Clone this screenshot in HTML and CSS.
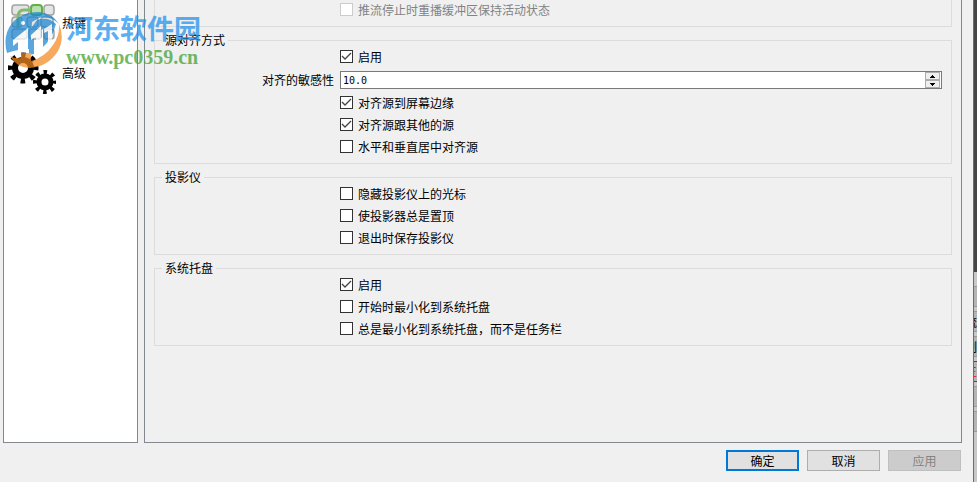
FILE: index.html
```html
<!DOCTYPE html>
<html lang="zh-CN">
<head>
    <meta charset="UTF-8">
    <meta name="viewport" content="width=device-width, initial-scale=1.0">
    <title>设置</title>
    <link rel="stylesheet" href="styles.css">
</head>
<body>

<div class="dialog">
    <div class="main">
        <nav class="sidebar">
            <a class="nav-item" href="#hotkeys">
                <svg class="nav-icon" viewBox="0 0 48 48">
                    <g fill="#e4e4e4" stroke="#a2a2a2" stroke-width="1.5">
                        <rect x="4" y="6" width="17" height="10" rx="3"/>
                        <rect x="36" y="6" width="10" height="10" rx="3"/>
                        <rect x="4" y="18" width="10" height="10" rx="3"/>
                        <rect x="19" y="18" width="11" height="10" rx="3"/>
                        <rect x="33" y="18" width="12" height="10" rx="3"/>
                        <rect x="4" y="30" width="15" height="10" rx="3"/>
                        <rect x="21" y="30" width="12" height="10" rx="3"/>
                        <rect x="36" y="30" width="10" height="10" rx="3"/>
                    </g>
                    <rect x="23" y="6" width="11" height="10" rx="3" fill="#b9dfac" stroke="#5fb045" stroke-width="2"/>
                    <path d="M23 11h-7q-6 0-6 7v11" fill="none" stroke="#7fbd6c" stroke-width="3"/>
                </svg>
                <span>热键</span>
            </a>
            <a class="nav-item" href="#advanced">
                <svg class="nav-icon" viewBox="0 0 48 48">
                    <g fill="none" stroke="#000">
                        <circle cx="15" cy="19" r="8" stroke-width="6"/>
                        <circle cx="15" cy="19" r="13" stroke-width="5" stroke-dasharray="4.5 5.71" stroke-dashoffset="2.25"/>
                        <circle cx="37" cy="33" r="6" stroke-width="5"/>
                        <circle cx="37" cy="33" r="10" stroke-width="4" stroke-dasharray="3.5 4.35" stroke-dashoffset="1.75"/>
                    </g>
                </svg>
                <span>高级</span>
            </a>
        </nav>

        <form class="panel" id="settings">
            <fieldset class="group group-first">
                <label class="check disabled"><input type="checkbox" disabled>推流停止时重播缓冲区保持活动状态</label>
            </fieldset>

            <fieldset class="group">
                <legend>源对齐方式</legend>
                <label class="check"><input type="checkbox" checked>启用</label>
                <label class="field-label" for="sensitivity">对齐的敏感性</label>
                <div class="spin">
                    <input type="text" id="sensitivity" value="10.0">
                    <div class="spin-buttons">
                        <button type="button" aria-label="增加"><svg viewBox="0 0 5 3"><path d="M2 0h1v1h1v1h1v1H0V2h1V1h1z"/></svg></button>
                        <button type="button" aria-label="减少"><svg viewBox="0 0 5 3"><path d="M0 0h5v1H4v1H3v1H2V2H1V1H0z"/></svg></button>
                    </div>
                </div>
                <label class="check"><input type="checkbox" checked>对齐源到屏幕边缘</label>
                <label class="check"><input type="checkbox" checked>对齐源跟其他的源</label>
                <label class="check"><input type="checkbox">水平和垂直居中对齐源</label>
            </fieldset>

            <fieldset class="group">
                <legend>投影仪</legend>
                <label class="check"><input type="checkbox">隐藏投影仪上的光标</label>
                <label class="check"><input type="checkbox">使投影器总是置顶</label>
                <label class="check"><input type="checkbox">退出时保存投影仪</label>
            </fieldset>

            <fieldset class="group">
                <legend>系统托盘</legend>
                <label class="check"><input type="checkbox" checked>启用</label>
                <label class="check"><input type="checkbox">开始时最小化到系统托盘</label>
                <label class="check"><input type="checkbox">总是最小化到系统托盘，而不是任务栏</label>
            </fieldset>
        </form>
    </div>

    <div class="footer">
        <button type="submit" form="settings" class="button default">确定</button>
        <button type="button" class="button">取消</button>
        <button type="button" class="button" disabled>应用</button>
    </div>
</div>

<!-- main window behind the dialog -->
<div class="behind">
    <div class="preview"></div>
    <div class="behind-button"></div>
    <div class="behind-button"><span>流</span></div>
    <div class="behind-button"><span>制</span></div>
    <div class="behind-button active"><span>王</span></div>
    <div class="behind-button"></div>
    <div class="behind-button"></div>
</div>

<div class="watermark">
    <svg class="watermark-logo" viewBox="0 0 58 58">
        <path d="M3 42Q-2 24 9 11 20 0 35 1q13 1 20 12-9-9-20-6L28 11 26 38q-12 0-23 4z" fill="#1c86d1"/>
        <path d="M33 9q11-4 19 4-4 15-13 23v-18l-9 6v19l-5 1V20z" fill="#1c86d1"/>
        <path d="M55 13q6 14-1 27Q44 56 25 57q-13-1-19-12 5 3 11 2v-5h10v8q14-4 22-16 7-10 6-21z" fill="#f58a1f"/>
        <path d="M9 29L24 17v22l-4 1H14V31l-5 4zM27 24l10-9v25l-5 3V26l-5 3zM40 18l8-5v16l-4 6V20l-4 2z" fill="#fff"/>
        <circle cx="19" cy="12" r="2" fill="#fff"/>
    </svg>
    <div>
        <div class="watermark-name">河东软件园</div>
        <div class="watermark-url">www.pc0359.cn</div>
    </div>
</div>

</body>
</html>
```

FILE: styles.css
```css
* {
    box-sizing: border-box;
}
body {
    margin: 0;
    min-height: 100vh;
    display: flex;
    background-color: #f0f0f0;
    color: #000;
    font-family: "Noto Sans CJK SC", sans-serif;
    font-size: 12px;
    line-height: 16px;
}
button, input {
    font: inherit;
    color: inherit;
}
.dialog {
    flex: 1;
    display: flex;
    flex-direction: column;
    border-right: 1px solid #1883d7;
}
.main {
    flex: 1;
    display: flex;
    gap: 6px;
    padding: 0 11px 0 3px;
}
.sidebar {
    width: 135px;
    background-color: #fff;
    border: 1px solid #828790;
    border-top: none;
}
.nav-item {
    display: flex;
    align-items: center;
    gap: 6px;
    height: 50px;
    padding: 0 0 4px 4px;
    color: #000;
    text-decoration: none;
}
.nav-icon {
    width: 48px;
    height: 48px;
}
.panel {
    flex: 1;
    padding: 0 9px;
    border: 1px solid #828790;
    border-top: none;
}
.group {
    display: grid;
    grid-template-columns: 179px 1fr;
    gap: 6px;
    min-width: 0;
    margin: 0 0 5px;
    padding: 1px 9px 8px 0;
    border: 1px solid #dcdcdc;
}
.group-first {
    padding-top: 2px;
    border-top: none;
}
legend {
    margin-left: 7px;
    padding: 0 3px;
}
.check {
    grid-column: 2;
    justify-self: start;
    display: flex;
    align-items: center;
    gap: 5px;
}
.check input {
    appearance: none;
    width: 13px;
    height: 13px;
    margin: 0 0 1px;
    background: #fff;
    border: 1px solid #333;
}
.check input:checked {
    background: #fff url("data:image/svg+xml,%3Csvg xmlns='http://www.w3.org/2000/svg' viewBox='0 0 11 11'%3E%3Cpath d='M1 5l3 3 6-6' fill='none' stroke='%23444' stroke-width='1.3'/%3E%3C/svg%3E");
}
.check.disabled {
    color: #838383;
}
.check input:disabled {
    border-color: #ccc;
}
.field-label {
    justify-self: end;
    line-height: 18px;
}
.spin {
    display: flex;
    height: 18px;
    background-color: #fff;
    border: 1px solid #7a7a7a;
}
.spin input {
    flex: 1;
    min-width: 0;
    padding: 1px 2px 0;
    border: none;
    background: none;
    outline: none;
    font-family: "DejaVu Sans Mono", monospace;
    font-size: 10px;
}
.spin-buttons {
    display: flex;
    flex-direction: column;
    width: 16px;
    padding-right: 1px;
}
.spin-buttons button {
    flex: 1;
    display: flex;
    align-items: center;
    justify-content: center;
    padding: 0;
    background-color: #eee;
    border: 1px solid #acacac;
}
.spin-buttons svg {
    width: 5px;
    height: 3px;
}
.footer {
    display: flex;
    justify-content: flex-end;
    gap: 8px;
    padding: 7px 12px 11px;
}
.button {
    width: 73px;
    height: 21px;
    padding: 0;
    background-color: #e1e1e1;
    border: 1px solid #adadad;
    line-height: 18px;
}
.button.default {
    border: 2px solid #0078d7;
}
.button:disabled {
    background-color: #ccc;
    border-color: #bfbfbf;
    color: #838383;
}
.behind {
    width: 3px;
    display: flex;
    flex-direction: column;
    gap: 4px;
    overflow: hidden;
    background-color: #c8c8c8;
}
.preview {
    height: 272px;
    margin-bottom: 10px;
    background-color: #444;
}
.behind-button {
    display: flex;
    align-items: center;
    justify-content: flex-end;
    height: 21px;
    overflow: hidden;
    background-color: #b4b4b4;
    border: solid #999;
    border-width: 1px 0;
}
.behind-button.active {
    border-color: #0a5ca8;
    color: #f00;
}
.watermark {
    position: absolute;
    top: 11px;
    left: 4px;
    display: flex;
    gap: 4px;
    opacity: 0.72;
    pointer-events: none;
}
.watermark-logo {
    width: 58px;
    height: 58px;
}
.watermark-name {
    color: #1c90ee;
    font-size: 27px;
    font-weight: bold;
    line-height: 34px;
}
.watermark-url {
    color: #3ca02c;
    font-family: "Liberation Serif", serif;
    font-size: 20px;
    font-weight: bold;
    line-height: 24px;
}
```
